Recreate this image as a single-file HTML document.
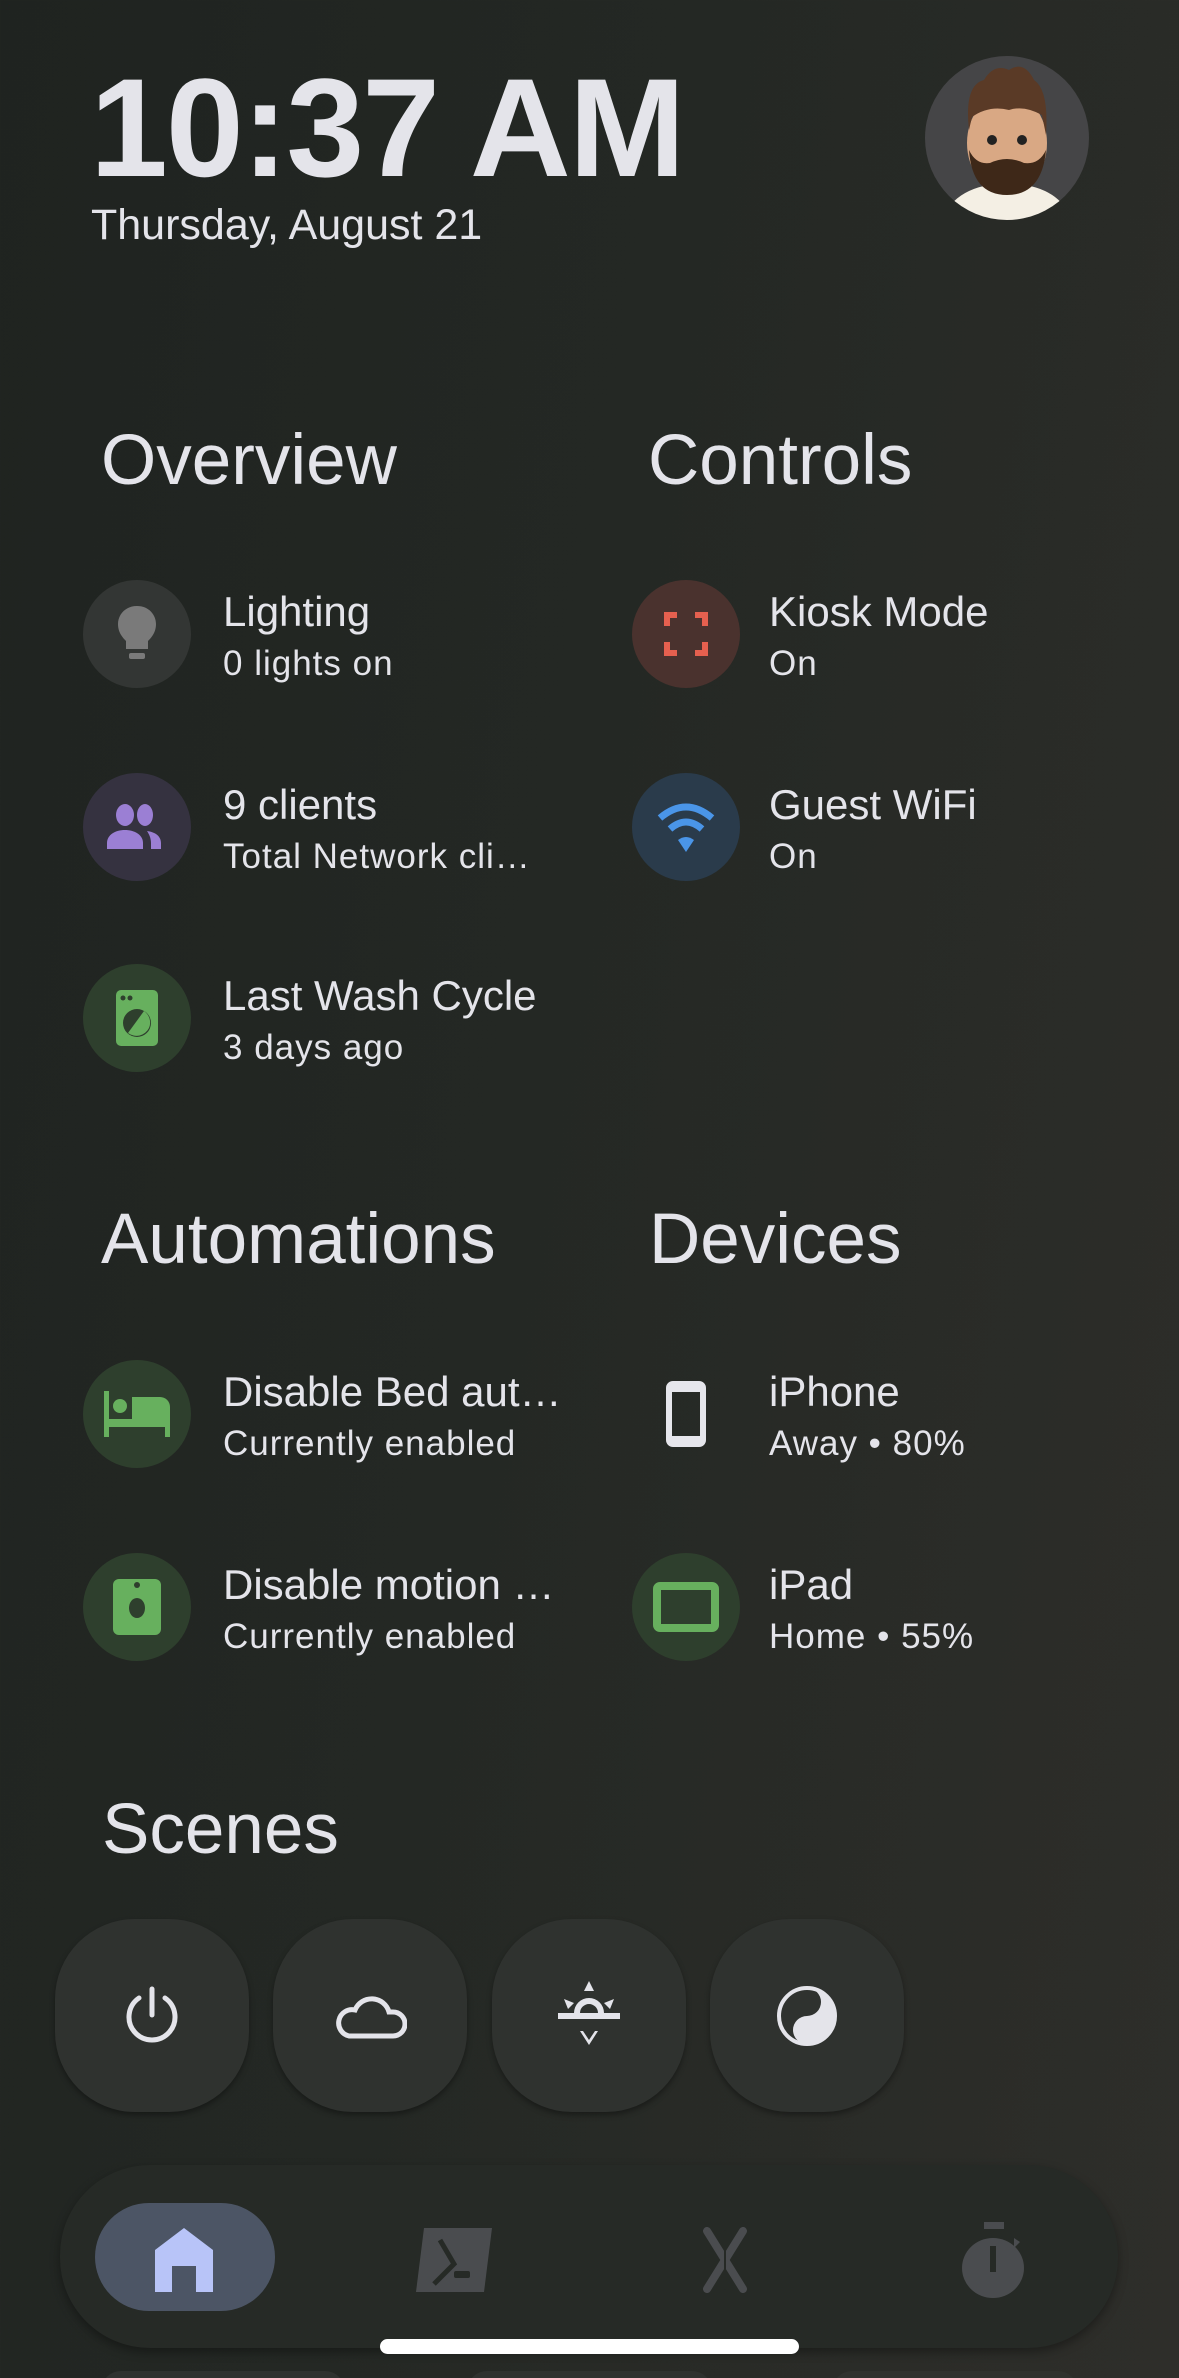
<!DOCTYPE html>
<html><head><meta charset="utf-8"><style>
*{margin:0;padding:0;box-sizing:border-box}
html,body{width:1179px;height:2378px;overflow:hidden}
body{position:relative;background:linear-gradient(100deg,#1f2320 0%,#242824 45%,#2e2e2a 100%);font-family:"Liberation Sans",sans-serif;color:#e4e4ea}
.a{position:absolute;white-space:nowrap}
.h{font-size:71px;line-height:70px;font-weight:400}
.t{font-size:42px;line-height:40px}
.s{font-size:35px;line-height:34px;letter-spacing:1px}
.c{position:absolute;width:108px;height:108px;border-radius:50%;display:flex;align-items:center;justify-content:center}
.sb{position:absolute;top:1919px;width:194px;height:193px;border-radius:80px;background:#2f322f;box-shadow:0 3px 6px rgba(0,0,0,.35);display:flex;align-items:center;justify-content:center}
</style></head><body>

<div class="a" style="left:90px;top:58px;font-size:140px;line-height:140px;font-weight:700;letter-spacing:-2px">10:37 AM</div>
<div class="a" style="left:91px;top:205px;font-size:43px;line-height:40px">Thursday, August 21</div>

<svg class="a" style="left:924px;top:55px" width="166" height="166" viewBox="0 0 166 166">
<defs><clipPath id="cc"><circle cx="83" cy="83" r="82"/></clipPath></defs>
<circle cx="83" cy="83" r="82" fill="#454547"/>
<g clip-path="url(#cc)">
<path d="M18 166 Q30 130 83 128 Q136 130 148 166Z" fill="#f4efe4"/>
<ellipse cx="83" cy="88" rx="40" ry="50" fill="#d9a884"/>
<path d="M45 75 Q40 30 60 25 Q70 8 85 15 Q100 5 110 25 Q125 35 122 80 L118 60 Q100 50 85 55 Q65 50 48 62Z" fill="#5a3a26"/>
<path d="M45 95 Q48 140 83 140 Q118 140 122 95 Q115 110 100 108 Q83 100 66 108 Q52 110 45 95Z" fill="#3e2818"/>
<circle cx="68" cy="85" r="5" fill="#222"/><circle cx="98" cy="85" r="5" fill="#222"/>
</g></svg>

<div class="a h" style="left:101px;top:426px">Overview</div>
<div class="a h" style="left:648px;top:426px">Controls</div>
<div class="a h" style="left:101px;top:1205px">Automations</div>
<div class="a h" style="left:649px;top:1205px">Devices</div>
<div class="a h" style="left:102px;top:1795px">Scenes</div>

<div class="c" style="left:83px;top:580px;background:#333634">
<svg width="44" height="60" viewBox="0 0 44 60"><path d="M22 2C10 2 3 11 3 20c0 8 4 13 8 17v8h22v-8c4-4 8-9 8-17C41 11 34 2 22 2z" fill="#7a7a7a"/><rect x="14" y="49" width="16" height="6" rx="2" fill="#7a7a7a"/></svg></div>
<div class="a t" style="left:223px;top:592px">Lighting</div>
<div class="a s" style="left:223px;top:647px">0 lights on</div>

<div class="c" style="left:83px;top:773px;background:#353240">
<svg width="64" height="48" viewBox="0 0 64 48"><ellipse cx="20" cy="12" rx="9" ry="11" fill="#9b7fd4"/><ellipse cx="40" cy="12" rx="8" ry="11" fill="#9b7fd4"/><path d="M2 46v-6c0-8 8-13 18-13s18 5 18 13v6z" fill="#9b7fd4"/><path d="M42 28c8 1 14 5 14 12v6H46v-6c0-5-2-9-4-12z" fill="#9b7fd4"/></svg></div>
<div class="a t" style="left:223px;top:785px">9 clients</div>
<div class="a s" style="left:223px;top:840px">Total Network cli…</div>

<div class="c" style="left:83px;top:964px;background:#2e3f2d">
<svg width="42" height="56" viewBox="0 0 42 56"><rect x="0" y="0" width="42" height="56" rx="5" fill="#67b05e"/><circle cx="7" cy="8" r="2.5" fill="#2e3f2d"/><circle cx="14" cy="8" r="2.5" fill="#2e3f2d"/><circle cx="21" cy="33" r="14" fill="#2e3f2d"/><path d="M28 21 L12 43 A14 14 0 0 0 33 38 A14 14 0 0 0 28 21z" fill="#67b05e"/></svg></div>
<div class="a t" style="left:223px;top:976px">Last Wash Cycle</div>
<div class="a s" style="left:223px;top:1031px">3 days ago</div>

<div class="c" style="left:632px;top:580px;background:#4a322e">
<svg width="44" height="44" viewBox="0 0 44 44" fill="none" stroke="#e5604f" stroke-width="6"><path d="M3 14V3h10M31 3h10v11M41 30v11H31M13 41H3V30"/></svg></div>
<div class="a t" style="left:769px;top:592px">Kiosk Mode</div>
<div class="a s" style="left:769px;top:647px">On</div>

<div class="c" style="left:632px;top:773px;background:#2a3b4b">
<svg width="60" height="54" viewBox="0 0 60 54" fill="none" stroke="#4a95e8" stroke-width="7"><path d="M4 18 Q30 -4 56 18"/><path d="M14 29 Q30 15 46 29"/><path d="M22 40 L30 52 L38 40 Q30 34 22 40z" fill="#4a95e8" stroke="none"/></svg></div>
<div class="a t" style="left:769px;top:785px">Guest WiFi</div>
<div class="a s" style="left:769px;top:840px">On</div>

<div class="c" style="left:83px;top:1360px;background:#2e3f2d">
<svg width="66" height="46" viewBox="0 0 66 46"><rect x="0" y="0" width="5" height="46" fill="#67b05e"/><circle cx="16" cy="15" r="7" fill="#67b05e"/><path d="M28 6h28a10 10 0 0 1 10 10v30h-5v-10H5v-8h23z" fill="#67b05e"/></svg></div>
<div class="a t" style="left:223px;top:1372px">Disable Bed aut…</div>
<div class="a s" style="left:223px;top:1427px">Currently enabled</div>

<div class="c" style="left:83px;top:1553px;background:#2e3f2d">
<svg width="48" height="56" viewBox="0 0 48 56"><rect x="0" y="0" width="48" height="56" rx="6" fill="#67b05e"/><circle cx="24" cy="6" r="3" fill="#2e3f2d"/><ellipse cx="24" cy="29" rx="8" ry="10" fill="#2e3f2d"/></svg></div>
<div class="a t" style="left:223px;top:1565px">Disable motion …</div>
<div class="a s" style="left:223px;top:1620px">Currently enabled</div>

<div class="c" style="left:632px;top:1360px">
<svg width="40" height="66" viewBox="0 0 40 66"><rect x="3" y="3" width="34" height="60" rx="4" fill="none" stroke="#e6e6ec" stroke-width="6"/><rect x="3" y="3" width="34" height="8" fill="#e6e6ec"/><rect x="3" y="55" width="34" height="8" fill="#e6e6ec"/></svg></div>
<div class="a t" style="left:769px;top:1372px">iPhone</div>
<div class="a s" style="left:769px;top:1427px">Away • 80%</div>

<div class="c" style="left:632px;top:1553px;background:#2e3f2d">
<svg width="66" height="50" viewBox="0 0 66 50"><rect x="4" y="4" width="58" height="42" rx="3" fill="none" stroke="#67b05e" stroke-width="8"/></svg></div>
<div class="a t" style="left:769px;top:1565px">iPad</div>
<div class="a s" style="left:769px;top:1620px">Home • 55%</div>

<div class="sb" style="left:55px"><svg width="54" height="60" viewBox="0 0 54 60" fill="none" stroke="#e4e4ea" stroke-width="5" stroke-linecap="round"><path d="M27 3v26"/><path d="M14 12A23 23 0 1 0 40 12"/></svg></div>
<div class="sb" style="left:273px"><svg width="74" height="48" viewBox="0 0 74 48" fill="none" stroke="#e4e4ea" stroke-width="5"><path d="M16 44h44a12 12 0 0 0 0-24h-4A18 18 0 0 0 22 18 13 13 0 0 0 16 44z"/></svg></div>
<div class="sb" style="left:492px"><svg width="66" height="70" viewBox="0 0 66 70" fill="#e4e4ea"><path d="M33 0l5 10h-10z"/><path d="M2 32h62v6H2z"/><path d="M18 32a15 15 0 0 1 30 0h-6a9 9 0 0 0-18 0z"/><path d="M8 18l10 4-6 6zM58 18l-10 4 6 6z"/><path d="M24 50l9 14 9-14-3 0-6 9-6-9z"/></svg></div>
<div class="sb" style="left:710px"><svg width="62" height="66" viewBox="0 0 62 66"><circle cx="31" cy="33" r="28" fill="none" stroke="#e4e4ea" stroke-width="4"/><path d="M31 5a28 28 0 0 1 0 56a14 14 0 0 1 0-28a14 14 0 0 0 0-28z" fill="#e4e4ea"/></svg></div>

<div class="a" style="left:60px;top:2165px;width:1058px;height:183px;border-radius:90px;background:#262a26;box-shadow:0 4px 10px rgba(0,0,0,.35)"></div>
<div class="a" style="left:95px;top:2203px;width:180px;height:108px;border-radius:54px;background:#4c5565"></div>
<svg class="a" style="left:155px;top:2228px" width="58" height="64" viewBox="0 0 58 64"><path d="M29 0L58 22v42H41V38H17v26H0V22z" fill="#b8c4f8"/></svg>
<svg class="a" style="left:416px;top:2228px" width="76" height="64" viewBox="0 0 76 64"><path d="M8 0h68l-8 64H0z" fill="#4a4c4f"/><path d="M24 12l14 24-20 20" fill="none" stroke="#262a26" stroke-width="5"/><rect x="38" y="43" width="16" height="7" rx="2" fill="#262a26"/></svg>
<svg class="a" style="left:695px;top:2227px" width="60" height="66" viewBox="0 0 60 66" fill="none" stroke="#4a4c4f" stroke-width="8" stroke-linecap="round"><path d="M12 4l36 58M48 4L12 62"/><path d="M30 4v58" stroke="#262a26" stroke-width="2"/></svg>
<svg class="a" style="left:962px;top:2222px" width="64" height="76" viewBox="0 0 64 76"><rect x="22" y="0" width="20" height="7" fill="#4a4c4f"/><ellipse cx="31" cy="46" rx="31" ry="30" fill="#4a4c4f"/><rect x="28" y="24" width="6" height="26" fill="#262a26"/><path d="M52 16l6 4-6 6z" fill="#4a4c4f"/></svg>

<div class="a" style="left:380px;top:2339px;width:419px;height:15px;border-radius:8px;background:#fff"></div>

<div class="a" style="left:101px;top:2371px;width:244px;height:40px;border-radius:30px;background:#2f322f"></div>
<div class="a" style="left:467px;top:2371px;width:245px;height:40px;border-radius:30px;background:#2f322f"></div>
<div class="a" style="left:832px;top:2371px;width:246px;height:40px;border-radius:30px;background:#30322e"></div>
</body></html>
